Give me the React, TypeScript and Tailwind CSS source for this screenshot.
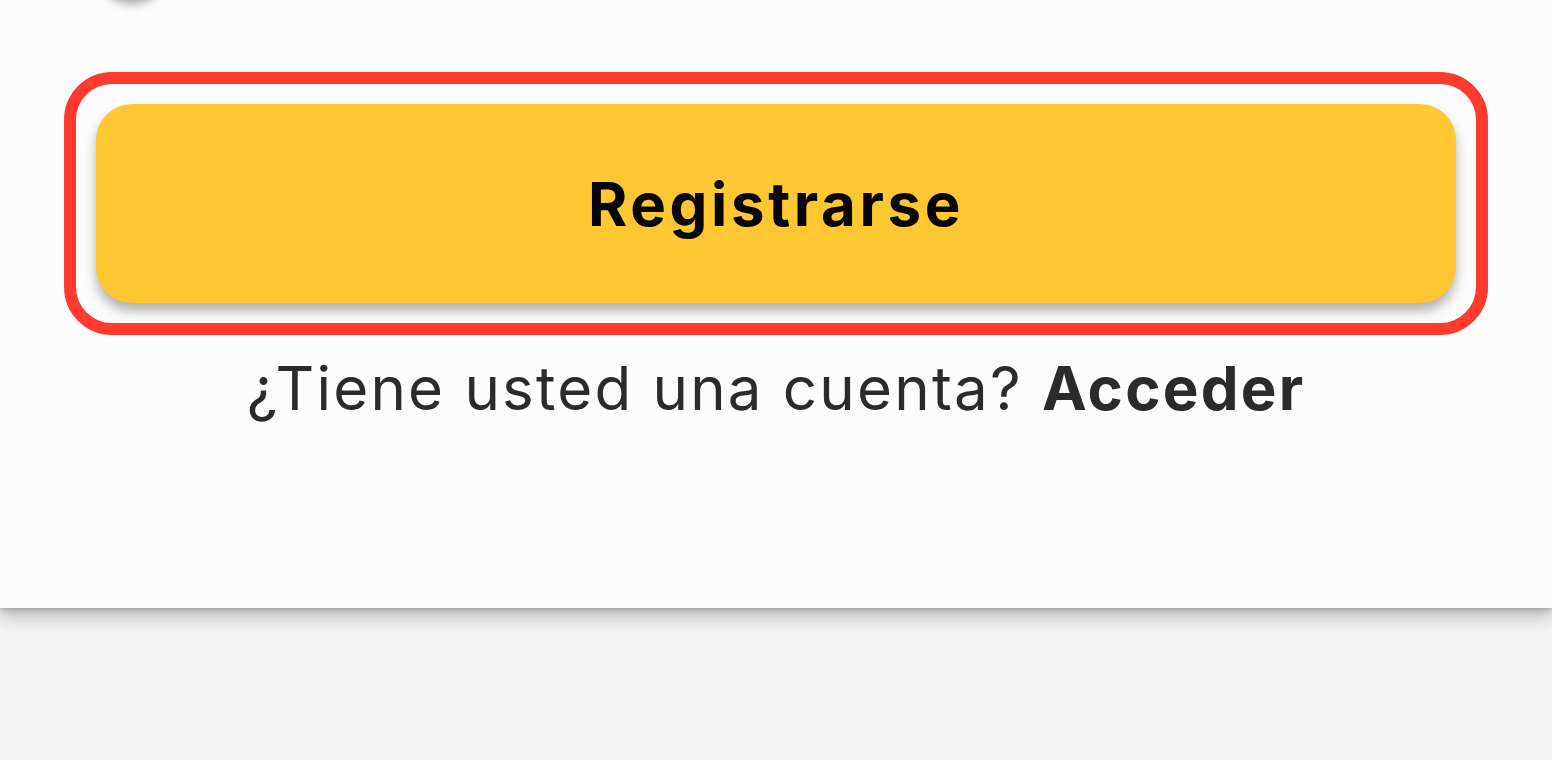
import React from "react";

export default function App() {
  return (
    <div className="min-h-screen w-full bg-[#f4f4f4] overflow-hidden" style={{ fontFamily: "Inter, 'Open Sans', sans-serif" }}>
      <div className="relative h-[608px] w-full bg-[#fcfcfc] shadow-[0_10px_16px_rgba(0,0,0,0.22),0_2px_4px_rgba(0,0,0,0.18)]">
        <div className="absolute left-[96px] top-[-84px] h-[84px] w-[72px] rounded-full bg-[#fcfcfc] shadow-[0_4px_10px_rgba(0,0,0,0.35)]" />
        <div className="flex flex-col items-center pt-[72px]">
          <div className="w-[1424px] rounded-[48px] border-[12px] border-[#ff3b30] p-[20px]">
            <button className="flex h-[199px] w-full items-center justify-center rounded-[36px] bg-[#ffc832] shadow-[0_8px_12px_rgba(0,0,0,0.3)]">
              <span className="text-[60px] font-bold tracking-[0.06em] text-[#050505] leading-none">Registrarse</span>
            </button>
          </div>
          <p className="mt-[17px] text-[60px] leading-[72px] tracking-[0.037em] text-[#2b2b2b]">
            ¿Tiene usted una cuenta? <span className="font-bold">Acceder</span>
          </p>
        </div>
      </div>
    </div>
  );
}
